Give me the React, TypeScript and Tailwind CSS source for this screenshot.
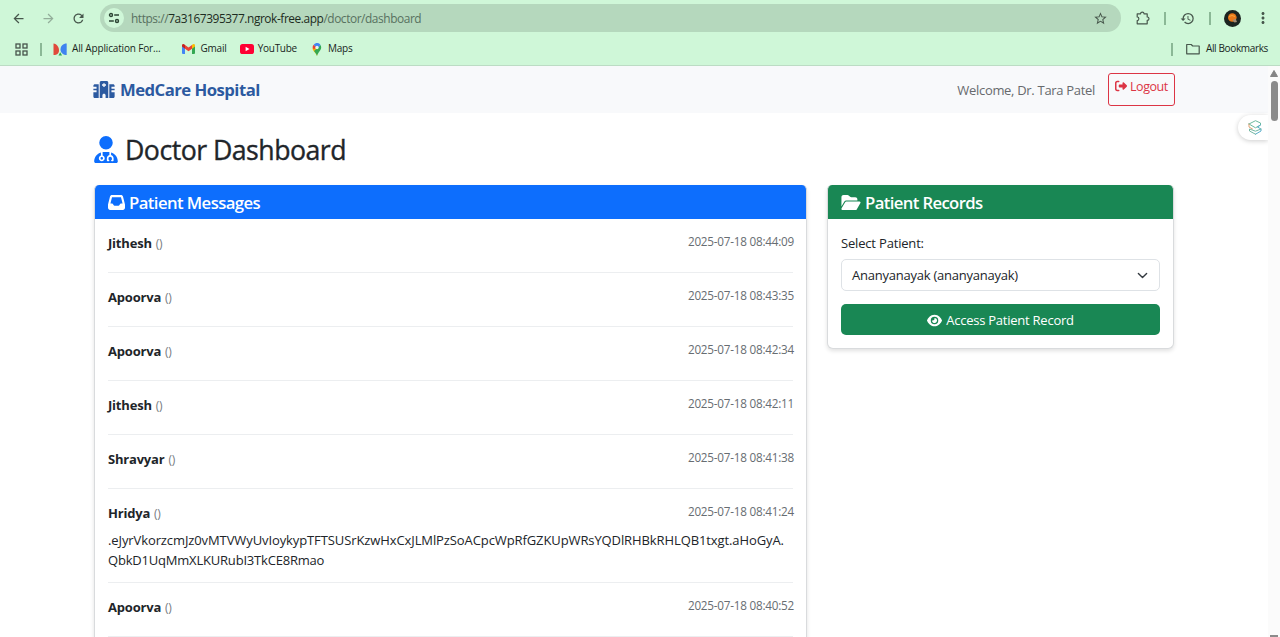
import type { ReactNode } from "react";
import {
  FaUserDoctor,
  FaInbox,
  FaFolderOpen,
  FaEye,
  FaRightFromBracket,
} from "react-icons/fa6";
import {
  MdArrowBack,
  MdArrowForward,
  MdRefresh,
  MdStarBorder,
  MdHistory,
  MdMoreVert,
} from "react-icons/md";

type Message = { name: string; time: string; body?: string[] };

const messages: Message[] = [
  { name: "Jithesh", time: "2025-07-18 08:44:09" },
  { name: "Apoorva", time: "2025-07-18 08:43:35" },
  { name: "Apoorva", time: "2025-07-18 08:42:34" },
  { name: "Jithesh", time: "2025-07-18 08:42:11" },
  { name: "Shravyar", time: "2025-07-18 08:41:38" },
  {
    name: "Hridya",
    time: "2025-07-18 08:41:24",
    body: [
      ".eJyrVkorzcmJz0vMTVWyUvIoykypTFTSUSrKzwHxCxJLMlPzSoACpcWpRfGZKUpWRsYQDlRHBkRHLQB1txgt.aHoGyA.",
      "QbkD1UqMmXLKURubI3TkCE8Rmao",
    ],
  },
  { name: "Apoorva", time: "2025-07-18 08:40:52" },
];

function HospitalIcon() {
  return (
    <svg width="22" height="17" viewBox="0 0 640 512" fill="#2c5aa0" fillRule="evenodd">
      <path d="M192 48C192 21.500 213.500 0 240 0H400C426.500 0 448 21.500 448 48V512H368V432C368 405.500 346.500 384 320 384S272 405.500 272 432V512H192ZM300 64V100H260V144H300V184H340V144H380V100H340V64Z" />
      <path d="M0 144C0 117.500 21.500 96 48 96H160V512H48C21.500 512 0 490.500 0 464V336H96V280H0V232H96V176H0Z" />
      <path d="M640 144C640 117.500 618.500 96 592 96H480V512H592C618.500 512 640 490.500 640 464V336H544V280H640V232H544V176H640Z" />
    </svg>
  );
}

function ExtensionIcon() {
  return (
    <svg width="14" height="14" viewBox="0 0 14 14" fill="none" stroke="#47574c" strokeWidth="1.2" strokeLinejoin="round">
      <path d="M1.200 2.800H4.600C4.600 0.600 8 0.600 8 2.800H11.200V6C13.600 6 13.600 9.400 11.200 9.400V12.800H1.200V9.600C3.400 9.600 3.400 6 1.200 6Z" />
    </svg>
  );
}

function FolderIcon() {
  return (
    <svg width="14" height="12" viewBox="0 0 14 12" fill="none" stroke="#47574c" strokeWidth="1.2" strokeLinejoin="round">
      <path d="M0.700 1.500H5.200L6.700 3H13.200V10.800H0.700Z" />
    </svg>
  );
}

function SiteControlsIcon() {
  return (
    <svg width="12" height="12" viewBox="0 0 12 12" fill="none" stroke="#2c4434" strokeWidth="1.4">
      <circle cx="3" cy="3" r="1.5" />
      <path d="M6.200 3H11M1 9H5.800" />
      <circle cx="9" cy="9" r="1.5" />
    </svg>
  );
}

function AppsIcon() {
  return (
    <svg width="13" height="13" viewBox="0 0 13 13" fill="none" stroke="#48554c" strokeWidth="1.3">
      <rect x="1" y="1" width="4" height="4" />
      <rect x="8" y="1" width="4" height="4" />
      <rect x="1" y="8" width="4" height="4" />
      <rect x="8" y="8" width="4" height="4" />
    </svg>
  );
}

function FormsIcon() {
  return (
    <svg width="14" height="13" viewBox="0 0 14 13">
      <path d="M0.500 0.500C4 1 6 4 6 7.500C6 10 4.500 12 0.500 12Z" fill="#e04a3b" />
      <path d="M13.700 0.500C10 0.500 7.500 3 7.500 6.500C7.500 10 10.500 12 13.700 12Z" fill="#3f83f0" />
      <path d="M5.500 12.500L7.200 9.200L9 12.500Z" fill="#2fa653" />
    </svg>
  );
}

function GmailIcon() {
  return (
    <svg width="13" height="10" viewBox="0 0 52 40">
      <path d="M0 6V36Q0 40 4 40H12V17Z" fill="#4285f4" />
      <path d="M52 6V36Q52 40 48 40H40V17Z" fill="#34a853" />
      <path d="M40 4V19L52 10V6C52 0 45 -2 40 4Z" fill="#fbbc04" />
      <path d="M12 19V4L26 14L40 4V19L26 29Z" fill="#ea4335" />
      <path d="M0 6V10L12 19V4C7 -2 0 0 0 6Z" fill="#c5221f" />
    </svg>
  );
}

function YouTubeIcon() {
  return (
    <svg width="14" height="10" viewBox="0 0 14 10">
      <rect width="14" height="10" rx="2.600" fill="#ff0033" />
      <path d="M5.600 2.800L9.500 5L5.600 7.200Z" fill="#fff" />
    </svg>
  );
}

function MapsIcon() {
  return (
    <svg width="10" height="13" viewBox="0 0 20 26">
      <path d="M10 26C9 20 1 17 1 10L6 6L15 14C12 18 11 20 10 26Z" fill="#fbbc04" />
      <path d="M10 26C9 21 6 19 4 16L17 4C22 13 12 17 10 26Z" fill="#34a853" />
      <path d="M3.500 3.500L9 8L4 13C1 11 0 7 3.500 3.500Z" fill="#ea4335" />
      <path d="M3.500 3.500C7 -1 14 -1 17 4L11 11L7 7Z" fill="#4285f4" />
      <circle cx="10" cy="9" r="3.300" fill="#e9f7ec" />
    </svg>
  );
}

function ProfilePicture() {
  return (
    <svg width="17" height="17" viewBox="0 0 17 17">
      <circle cx="8.500" cy="8.500" r="8.500" fill="#1c2420" />
      <circle cx="8.300" cy="7.500" r="4.300" fill="#e9781a" />
      <path d="M5 6.500Q8 4.500 11 6.500" stroke="#f9a53c" fill="none" />
      <path d="M8.500 10.500L11.500 8.500L13 12L10.500 12.500Z" fill="#a58b74" />
    </svg>
  );
}

function SidebarLogo() {
  return (
    <svg width="14" height="15" viewBox="0 0 14 15" fill="none" strokeWidth="1" strokeLinejoin="round" strokeLinecap="round">
      <path d="M1 4L7.500 0.700L12.500 3L12.500 5L7.500 7.800L1 4Z" stroke="#6cb99f" />
      <path d="M1 4V7L4.500 9" stroke="#e3a173" />
      <path d="M12.500 5L9.500 7L13 9V11L7.500 14.200" stroke="#58aeca" />
      <path d="M13 9L7.500 11.200L1.500 9V11L7.500 14.200" stroke="#74b8a4" />
    </svg>
  );
}

function Divider() {
  return <div className="h-[13px] w-[2px] bg-[#8bb896]" />;
}

function Bookmark({ icon, children }: { icon: ReactNode; children: ReactNode }) {
  return (
    <div className="flex items-center gap-[5px] whitespace-nowrap">
      {icon}
      <span className="pb-[1px]">{children}</span>
    </div>
  );
}

function Browser() {
  return (
    <div className="h-[66px] shrink-0 border-b border-[#bcdcc4] bg-[#cff7d8] text-[#47574c]">
      <div className="flex h-[36px] items-center pl-[11px]">
        <MdArrowBack size={15} />
        <MdArrowForward size={15} className="ml-[15px] text-[#93ae9a]" />
        <MdRefresh size={15} className="ml-[15px]" />
        <div className="ml-[14px] flex h-[28px] w-[1021px] items-center rounded-full bg-[#b5d8bd] pl-[4px] pr-[13px]">
          <div className="flex size-[20px] items-center justify-center rounded-full bg-[#cff7d8]">
            <SiteControlsIcon />
          </div>
          <div className="ml-[7px] pt-[1px] text-[11.900px] tracking-[-0.43px] text-[#587160]">
            https://<span className="text-[#1c2b21]">7a3167395377.ngrok-free.app</span>/doctor/dashboard
          </div>
          <MdStarBorder size={15} className="ml-auto" />
        </div>
        <div className="ml-[15px]"><ExtensionIcon /></div>
        <div className="ml-[14px]"><Divider /></div>
        <MdHistory size={15} className="ml-[14px]" />
        <div className="ml-[14px]"><Divider /></div>
        <div className="ml-[13px]"><ProfilePicture /></div>
        <MdMoreVert size={18} className="ml-[13px]" />
      </div>
      <div className="flex h-[26px] items-center pl-[15px] pr-[12px] text-[10px] tracking-[-0.16px] text-[#18251c]">
        <AppsIcon />
        <div className="ml-[12px] mr-[11px]"><Divider /></div>
        <Bookmark icon={<FormsIcon />}>All Application For...</Bookmark>
        <div className="ml-[22px]"><Bookmark icon={<GmailIcon />}>Gmail</Bookmark></div>
        <div className="ml-[13px] tracking-[-0.28px]"><Bookmark icon={<YouTubeIcon />}><span className="-ml-[1px]">YouTube</span></Bookmark></div>
        <div className="ml-[15px]"><Bookmark icon={<MapsIcon />}><span className="ml-[1px]">Maps</span></Bookmark></div>
        <div className="ml-auto mr-[13px]"><Divider /></div>
        <div className="tracking-[-0.35px]"><Bookmark icon={<FolderIcon />}><span className="ml-[1px]">All Bookmarks</span></Bookmark></div>
      </div>
    </div>
  );
}

function MessageItem({ message }: { message: Message }) {
  return (
    <div className="border-b border-[#eceef0] pb-[12px] pt-[14px]">
      <div className="flex h-[20px] justify-between">
        <div className="flex items-center gap-[4px] pt-[2px]">
          <strong className="text-[13px] font-bold tracking-[-0.2px]">{message.name}</strong>
          <span className="text-[12px] tracking-[-0.3px] text-[#777c81]">()</span>
        </div>
        <span className="-mr-px text-[11.700px] leading-[17px] tracking-[-0.22px] text-[#676d72]">{message.time}</span>
      </div>
      <div className="mt-[7px] text-[13px] leading-[20px] tracking-[-0.2px]">
        {message.body?.map((line) => (
          <p key={line} className="whitespace-nowrap first:tracking-[-0.1px]">{line}</p>
        ))}
      </div>
    </div>
  );
}

export default function App() {
  return (
    <div className="flex h-[637px] w-[1280px] flex-col overflow-hidden bg-white font-['Open_Sans',sans-serif] text-[#212529]">
      <Browser />
      <div className="flex min-h-0 flex-1">
        <div className="relative w-[1268px] overflow-hidden">
          <nav className="flex h-[47px] items-center bg-[#f8f9fb] pl-[93px] pr-[93px]">
            <HospitalIcon />
            <span className="ml-[5px] text-[16.700px] font-bold tracking-[-0.52px] text-[#2c5aa0]">MedCare Hospital</span>
            <span className="ml-auto pt-[2px] text-[13px] tracking-[-0.31px] text-[#676a6d]">Welcome, Dr. Tara Patel</span>
            <button className="mb-[1px] ml-[13px] flex h-[33px] w-[67px] gap-[3px] rounded-[3px] border border-[#dc3545] pl-[6px] pt-[4px] text-[12.500px] leading-[18px] tracking-[-0.45px] text-[#dc3545]">
              <FaRightFromBracket className="mt-[2px] size-[12px] shrink-0" />
              Logout
            </button>
          </nav>
          <main className="pl-[94px]">
            <h1 className="flex h-[72px] items-center pt-[3px] text-[26.700px] font-medium tracking-[-0.52px] [-webkit-text-stroke:0.35px_#212529]">
              <FaUserDoctor className="mr-[7px] mb-[2px] h-[27px] w-[24px] text-[#0d6efd]" />
              Doctor Dashboard
            </h1>
            <div className="flex items-start gap-[20px]">
              <section className="w-[713px] shrink-0 rounded-[6px] border border-t-0 border-[#d9dbdd] bg-white pb-[40px] shadow-[0_2px_4px_rgba(0,0,0,0.12)]">
                <h2 className="-mx-px flex h-[34px] items-center gap-[4px] rounded-t-[5px] border-x border-[#d9dbdd] bg-[#0d6efd] pl-[13px] pt-[1px] text-[16.700px] font-semibold tracking-[-0.57px] text-white">
                  <FaInbox className="size-[17px]" />
                  Patient Messages
                </h2>
                <div className="px-[13px]">
                  {messages.map((message) => (
                    <MessageItem key={message.time} message={message} />
                  ))}
                </div>
              </section>
              <section className="w-[347px] shrink-0 rounded-[6px] border border-t-0 border-[#d9dbdd] bg-white pb-[13px] shadow-[0_2px_4px_rgba(0,0,0,0.12)]">
                <h2 className="-mx-px flex h-[34px] items-center gap-[4px] rounded-t-[5px] border-x border-[#d9dbdd] bg-[#198754] pl-[13px] pt-[1px] text-[16.700px] font-semibold tracking-[-0.62px] text-white">
                  <FaFolderOpen className="h-[17px] w-[20px]" />
                  Patient Records
                </h2>
                <div className="px-[13px] pt-[14px] text-[13px] tracking-[-0.24px]">
                  <label className="block leading-[20px] tracking-[-0.18px]">Select Patient:</label>
                  <div className="mt-[6px] flex h-[32px] items-center justify-between rounded-[5px] border border-[#dee2e6] pl-[10px] pr-[11px]">
                    <span className="pt-[2px]">Ananyanayak (ananyanayak)</span>
                    <svg width="11" height="11" viewBox="0 0 16 16" fill="none" stroke="#343a40" strokeWidth="2" strokeLinecap="round" strokeLinejoin="round">
                      <path d="m2 5 6 6 6-6" />
                    </svg>
                  </div>
                  <button className="mt-[13px] flex h-[31px] w-full items-center justify-center gap-[4px] rounded-[5px] bg-[#198754] pt-[2px] text-white">
                    <FaEye className="size-[15px]" />
                    Access Patient Record
                  </button>
                </div>
              </section>
            </div>
          </main>
          <div className="absolute right-0 top-[49px] flex h-[25px] w-[30px] items-center justify-center rounded-l-full bg-white pl-[4px] shadow-[0_1px_5px_rgba(0,0,0,0.2)]">
            <SidebarLogo />
          </div>
        </div>
        <div className="flex w-[12px] flex-col items-center bg-[#fbfbfb] pt-[4px]">
          <svg width="8" height="7" viewBox="0 0 8 7"><path d="M4 0.500L7.500 6.500H0.500Z" fill="#858585" stroke="#858585" strokeLinejoin="round" /></svg>
          <div className="mt-[4px] h-[40px] w-[7px] rounded-full bg-[#8b8b8b]" />
          <div className="mt-auto h-[2px] w-[8px] bg-[#8b8b8b]" />
        </div>
      </div>
    </div>
  );
}
